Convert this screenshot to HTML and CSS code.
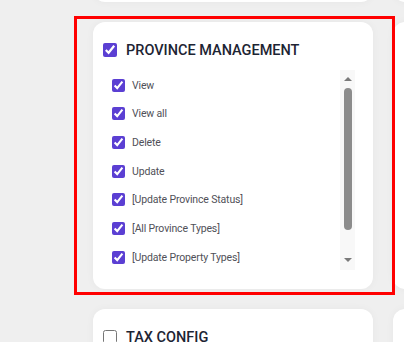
FILE: index.html
```html
<!DOCTYPE html>
<html lang="en">
<head>
    <meta charset="UTF-8">
    <meta name="viewport" content="width=device-width, initial-scale=1.0">
    <title>Role Permissions</title>
    <link rel="stylesheet" href="styles.css">
</head>
<body>

    <div class="modules">
        <section class="card card-short"></section>
        <section class="card card-short"></section>

        <section class="card highlighted">
            <label class="card-head">
                <input type="checkbox" checked>
                <span>PROVINCE MANAGEMENT</span>
            </label>

            <div class="perm-box">
                <div class="perm-list">
                    <label class="perm"><input type="checkbox" checked><span>View</span></label>
                    <label class="perm"><input type="checkbox" checked><span>View all</span></label>
                    <label class="perm"><input type="checkbox" checked><span>Delete</span></label>
                    <label class="perm"><input type="checkbox" checked><span>Update</span></label>
                    <label class="perm"><input type="checkbox" checked><span>[Update Province Status]</span></label>
                    <label class="perm"><input type="checkbox" checked><span>[All Province Types]</span></label>
                    <label class="perm"><input type="checkbox" checked><span>[Update Property Types]</span></label>
                    <label class="perm"><input type="checkbox" checked><span>[Delete Property Types]</span></label>
                </div>

                <!-- scrollbar drawn by hand, the browser hides the real one -->
                <div class="scrollbar">
                    <span class="arrow up"></span>
                    <span class="thumb"></span>
                    <span class="arrow down"></span>
                </div>
            </div>
        </section>

        <section class="card card-tall"></section>

        <section class="card">
            <label class="card-head">
                <input type="checkbox">
                <span>TAX CONFIG</span>
            </label>
        </section>

        <section class="card"></section>
    </div>

</body>
</html>
```

FILE: styles.css
```css
/* General Styles */
html, body {
    overflow: hidden;
}

body {
    font-family: Roboto, 'Liberation Sans', sans-serif;
    background: #efefef;
    margin: 0;
}

.modules {
    display: grid;
    grid-template-columns: 280px 280px;
    gap: 20px;
    padding-left: 93px;
    margin-top: -118px;
}

/* Cards */
.card {
    background: #fff;
    border-radius: 12px;
    box-shadow: 0 0 8px rgba(0, 0, 0, 0.04);
    padding: 20px 18px 19px 10px;
    min-height: 40px;
}

.card-short {
    height: 120px;
    padding: 0;
}

.card-tall {
    height: 267px;
    padding: 0;
}

/* red highlight drawn round the selected card */
.highlighted {
    position: relative;
}

.highlighted::after {
    content: "";
    position: absolute;
    top: -6px;
    left: -19px;
    right: -22px;
    bottom: -6px;
    border: 3px solid #ff0000;
    pointer-events: none;
}

.card-head {
    display: flex;
    align-items: center;
    gap: 9px;
    height: 16px;
    font-size: 14.5px;
    font-weight: 500;
    color: #1d2433;
}

.card-head input {
    width: 14px;
    height: 14px;
    margin: 0;
    accent-color: #5b3fd3;
}

/* Permission list */
.perm-box {
    display: flex;
    height: 200px;
    margin-top: 12px;
}

.perm-list {
    flex: 1;
    overflow: hidden;
    padding: 1px 0 0 9px;
}

.perm {
    display: flex;
    align-items: center;
    gap: 7px;
    height: 28.67px;
    font-size: 10.5px;
    letter-spacing: -0.15px;
    color: #505058;
}

.perm input {
    width: 13px;
    height: 13px;
    margin: 0;
    accent-color: #5b3fd3;
}

/* Scrollbar */
.scrollbar {
    width: 15px;
    background: #f8f8f8;
    display: flex;
    flex-direction: column;
    align-items: center;
}

.arrow {
    width: 0;
    height: 0;
    border-left: 4px solid transparent;
    border-right: 4px solid transparent;
}

.arrow.up {
    margin-top: 7px;
    border-bottom: 4px solid #7a7a7a;
}

.arrow.down {
    margin-top: 28px;
    border-top: 4px solid #7a7a7a;
}

.thumb {
    width: 8px;
    height: 142px;
    margin-top: 7px;
    border-radius: 4px;
    background: #8c8c8c;
}
```
